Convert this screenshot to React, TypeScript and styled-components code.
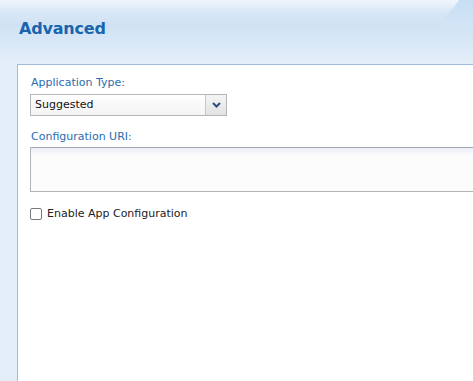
import { createGlobalStyle, styled } from 'styled-components';

const GlobalStyle = createGlobalStyle`
  html, body {
    margin: 0;
    padding: 0;
    overflow: hidden;
  }
  body {
    font-family: Verdana, "DejaVu Sans", sans-serif;
  }
`;

const StyledPage = styled.div`
  position: relative;
  width: 473px;
  height: 381px;
  overflow: hidden;
  background: linear-gradient(
    180deg,
    #f0f6fc 0px,
    #d9e8f6 12px,
    #cfe2f4 24px,
    #dce9f7 48px,
    #e4eef9 64px,
    #e4eef9 100%
  );
`;

const StyledGloss = styled.div`
  position: absolute;
  top: -10px;
  right: -30px;
  width: 50px;
  height: 36px;
  background: linear-gradient(180deg, #c3dbf2 0%, #d3e5f6 100%);
  transform: skewX(-38deg);
`;

const StyledHeader = styled.div`
  height: 64px;
  padding-left: 19px;
  box-sizing: border-box;
  display: flex;
  align-items: flex-start;
`;

const StyledTitle = styled.h1`
  margin: 19px 0 0;
  font-size: 16px;
  font-weight: bold;
  color: #1964ad;
  letter-spacing: -0.2px;
`;

const StyledPanel = styled.div`
  margin-left: 17px;
  height: 317px;
  background: #ffffff;
  border-top: 1px solid #a2bbdb;
  border-left: 1px solid #a2bbdb;
  padding: 11px 0 0 12px;
  box-sizing: border-box;
  display: flex;
  flex-direction: column;
`;

const StyledLabel = styled.label<{ $space: number }>`
  display: block;
  font-size: 11px;
  color: #2a6db0;
  line-height: 14px;
  margin-bottom: ${(p) => p.$space}px;
  margin-left: 1px;
`;

const StyledField = styled.div<{ $gap: number }>`
  margin-bottom: ${(p) => p.$gap}px;
`;

const StyledSelect = styled.div`
  width: 197px;
  height: 22px;
  border: 1px solid #b6b6b6;
  box-sizing: border-box;
  display: flex;
  background: linear-gradient(180deg, #ffffff 0%, #f4f4f4 100%);
`;

const StyledSelectValue = styled.div`
  flex: 1;
  font-size: 11px;
  color: #111;
  line-height: 20px;
  padding-left: 4px;
`;

const StyledSelectButton = styled.div`
  width: 20px;
  border-left: 1px solid #c8c8c8;
  background: linear-gradient(180deg, #f4f4f4 0%, #e2e2e2 100%);
  display: flex;
  align-items: center;
  justify-content: center;
`;

const StyledTextArea = styled.div`
  width: 460px;
  height: 45px;
  border: 1px solid #b3b3b3;
  border-top-color: #a9a9b6;
  box-sizing: border-box;
  background: linear-gradient(180deg, #eceef7 0px, #fcfcfc 8px, #fcfcfc 100%);
`;

const StyledCheckRow = styled.label`
  display: flex;
  align-items: center;
  gap: 5px;
  font-size: 11px;
  color: #222;
`;

const StyledCheckbox = styled.span`
  width: 12px;
  height: 12px;
  border: 1px solid #7a7a7a;
  border-radius: 2px;
  background: #fff;
  box-sizing: border-box;
`;

export default function App() {
  return (
    <>
      <GlobalStyle />
      <StyledPage>
        <StyledGloss />
        <StyledHeader>
          <StyledTitle>Advanced</StyledTitle>
        </StyledHeader>
        <StyledPanel>
          <StyledField $gap={14}>
            <StyledLabel $space={4}>Application Type:</StyledLabel>
            <StyledSelect>
              <StyledSelectValue>Suggested</StyledSelectValue>
              <StyledSelectButton>
                <svg width="9" height="6" viewBox="0 0 9 6">
                  <path d="M1 1 L4.5 4.5 L8 1" stroke="#2c4f7c" strokeWidth="2" fill="none" />
                </svg>
              </StyledSelectButton>
            </StyledSelect>
          </StyledField>
          <StyledField $gap={15}>
            <StyledLabel $space={3}>Configuration URI:</StyledLabel>
            <StyledTextArea />
          </StyledField>
          <StyledCheckRow>
            <StyledCheckbox />
            Enable App Configuration
          </StyledCheckRow>
        </StyledPanel>
      </StyledPage>
    </>
  );
}
